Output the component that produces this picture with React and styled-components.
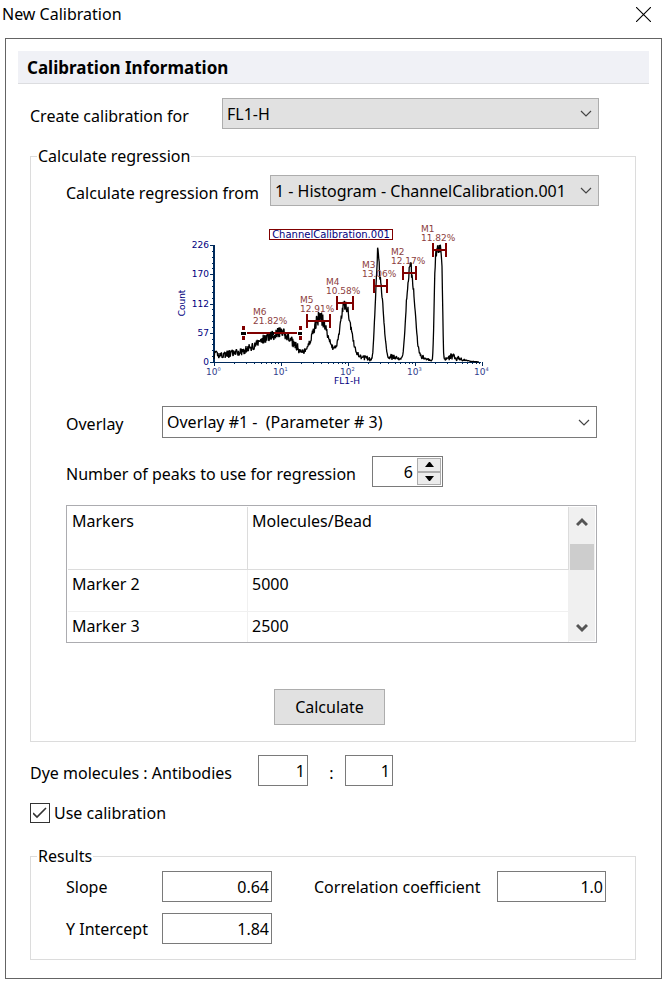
import React, { useState } from "react";
import styled, { createGlobalStyle } from "styled-components";

const markers = [
  { name: "M1", percent: "11.82%", from: 263, to: 276, y: 30, x: 251, labelY: 12 },
  { name: "M2", percent: "12.17%", from: 233, to: 246, y: 53, x: 221, labelY: 35 },
  { name: "M3", percent: "13.06%", from: 204, to: 217, y: 66, x: 192, labelY: 48 },
  { name: "M4", percent: "10.58%", from: 167, to: 183, y: 83, x: 156, labelY: 65 },
  { name: "M5", percent: "12.91%", from: 137, to: 160, y: 101, x: 130, labelY: 83 },
];

const yTicks = [
  { value: 226, y: 25 },
  { value: 170, y: 54 },
  { value: 112, y: 84 },
  { value: 57, y: 113 },
  { value: 0, y: 142 },
];

const DECADE = 67;
const AXIS_X = 44;
const AXIS_Y = 142;

//* center, height, left spread, right spread, shape, noise
const peaks = [
  [110, 22, 22, 13, 2, 4],
  [150, 40, 8, 8, 2, 10],
  [175, 54, 5, 6, 2, 10],
  [208, 82, 3, 5, 3, 8],
  [208, 30, 1, 1, 2, 4],
  [240, 80, 4, 5, 3, 8],
  [240, 14, 1, 2, 2, 8],
  [269, 110, 4, 3, 6, 10],
  [282, 3, 5, 9, 2, 5],
  [251, 4, 3, 4, 2, 5],
  [222, 3, 6, 6, 2, 3],
];

const buildHistogram = () => {
  let seed = 41;
  const random = () => {
    seed = (seed * 16807) % 2147483647;
    return seed / 2147483647;
  };
  const points = [];

  for (let x = AXIS_X; x <= 309; x += 0.4) {
    let level = x < 128 ? 7 : x < 200 ? 4 : x < 280 ? 2 : 2 - (x - 280) / 14;
    let noise = x < 128 ? 8 : x < 200 ? 5 : x < 295 ? 3 : 1;

    peaks.forEach(([center, height, left, right, shape, jitter]) => {
      const spread = x < center ? left : right;
      const shapeAt = Math.exp(
        -Math.pow(Math.abs(x - center) / (spread * 1.3), shape)
      );
      level += height * shapeAt;
      noise += jitter * Math.pow(shapeAt, 3);
    });

    const value = Math.max(0, level + (random() - 0.5) * noise);
    points.push(
      `${x.toFixed(1)},${(AXIS_Y - Math.min(value, 117)).toFixed(1)}`
    );
  }

  return points.join(" ");
};

const histogram = buildHistogram();

const Histogram = () => (
  <StyledChart viewBox="0 0 320 170" role="img" aria-label="Histogram">
    <g stroke="#002a5c" fill="none">
      <path d="M44 25V142" strokeWidth="2" />
      <path d="M44 142.5H311" strokeWidth="1" />
      {yTicks.map(({ value, y }) => (
        <path key={value} d={`M40 ${y + 0.5}h5`} />
      ))}
      {Array.from({ length: 20 }, (_, i) => (
        <path key={i} d={`M42 ${Math.round(25 + i * 5.85) + 0.5}h2`} />
      ))}
      {[0, 1, 2, 3].map((decade) =>
        [2, 3, 4, 5, 6, 7, 8, 9].map((n) => (
          <path
            key={`${decade}-${n}`}
            d={`M${Math.round(AXIS_X + (decade + Math.log10(n)) * DECADE) + 0.5} 142v2`}
          />
        ))
      )}
      {[0, 1, 2, 3, 4].map((decade) => (
        <path key={decade} d={`M${AXIS_X + decade * DECADE + 0.5} 142v4`} />
      ))}
    </g>
    <polyline
      points={histogram}
      fill="none"
      stroke="#000"
      strokeWidth="1.3"
      strokeLinejoin="bevel"
    />
    {markers.map(({ name, percent, from, to, y, x, labelY }) => (
      <g key={name}>
        <path
          d={`M${from} ${y}H${to}M${from} ${y - 7}v14M${to} ${y - 7}v14`}
          stroke="#800000"
          strokeWidth="2"
        />
        <StyledMarkerText x={x} y={labelY}>
          {name}
        </StyledMarkerText>
        <StyledMarkerText x={x} y={labelY + 9}>
          {percent}
        </StyledMarkerText>
      </g>
    ))}
    <path d="M77 113H127" stroke="#800000" strokeWidth="2" />
    <path
      d="M73.5 106v4M73.5 116v4M130.5 106v4M130.5 116v4"
      stroke="#800000"
      strokeWidth="3"
    />
    <path d="M71 113.5h5M100 113.5h4M128 113.5h4" stroke="#000" strokeWidth="3" />
    <StyledMarkerText x="83" y="95">
      M6
    </StyledMarkerText>
    <StyledMarkerText x="83" y="104">
      21.82%
    </StyledMarkerText>
    <rect x="99.5" y="9.5" width="123" height="10" fill="#fff" stroke="#800000" />
    <StyledChartTitle x="161" y="18" textAnchor="middle">
      ChannelCalibration.001
    </StyledChartTitle>
    {yTicks.map(({ value, y }) => (
      <StyledAxisText key={value} x="39" y={y + 3} textAnchor="end">
        {value}
      </StyledAxisText>
    ))}
    {[0, 1, 2, 3, 4].map((decade) => (
      <StyledScaleText key={decade} x={36 + decade * DECADE} y="155">
        10
        <tspan dy="-4" fontSize="5">
          {decade}
        </tspan>
      </StyledScaleText>
    ))}
    <StyledAxisText x="177" y="164" textAnchor="middle">
      FL1-H
    </StyledAxisText>
    <StyledAxisText transform="translate(15 83) rotate(-90)" textAnchor="middle">
      Count
    </StyledAxisText>
  </StyledChart>
);

const Dropdown = ({ id, options, plain }) => (
  <StyledDropdown>
    <StyledSelect id={id} $plain={plain}>
      {options.map((option) => (
        <option key={option}>{option}</option>
      ))}
    </StyledSelect>
    <svg width="12" height="7" viewBox="0 0 12 7" aria-hidden="true">
      <path d="M1 1l5 5 5-5" fill="none" stroke="#444" strokeWidth="1.2" />
    </svg>
  </StyledDropdown>
);

const App = () => {
  const [peakCount, setPeakCount] = useState(6);
  const [useCalibration, setUseCalibration] = useState(true);

  return (
    <StyledDialog>
      <GlobalStyle />
      <StyledTitleBar>
        <StyledTitle>New Calibration</StyledTitle>
        <StyledClose type="button" aria-label="Close">
          <svg width="15" height="15" viewBox="0 0 15 15">
            <path d="M0 0l15 15M15 0L0 15" stroke="#000" strokeWidth="1.1" />
          </svg>
        </StyledClose>
      </StyledTitleBar>

      <StyledPanel>
        <StyledHeading>Calibration Information</StyledHeading>
        <StyledContent>
          <StyledChannelRow>
            <StyledLabel htmlFor="channel">Create calibration for</StyledLabel>
            <Dropdown id="channel" options={["FL1-H"]} />
          </StyledChannelRow>

          <StyledRegression>
            <StyledLegend>Calculate regression</StyledLegend>
            <StyledSourceRow>
              <StyledLabel htmlFor="source">
                Calculate regression from
              </StyledLabel>
              <Dropdown
                id="source"
                options={["1 - Histogram - ChannelCalibration.001"]}
              />
            </StyledSourceRow>
            <Histogram />
            <StyledOverlayRow>
              <StyledLabel htmlFor="overlay">Overlay</StyledLabel>
              <Dropdown
                id="overlay"
                plain
                options={["Overlay #1 - \u00a0(Parameter # 3)"]}
              />
            </StyledOverlayRow>
            <StyledPeaksRow>
              <StyledLabel htmlFor="peaks">
                Number of peaks to use for regression
              </StyledLabel>
              <StyledSpinner>
                <StyledSpinnerInput
                  id="peaks"
                  value={peakCount}
                  onChange={(e) => setPeakCount(Number(e.target.value) || 0)}
                />
                <StyledSteps>
                  <StyledStep
                    type="button"
                    aria-label="Increase"
                    onClick={() => setPeakCount(peakCount + 1)}
                  >
                    <svg width="9" height="5" viewBox="0 0 9 5">
                      <path d="M0 5h9L5 0H4z" />
                    </svg>
                  </StyledStep>
                  <StyledStep
                    type="button"
                    aria-label="Decrease"
                    onClick={() => setPeakCount(peakCount - 1)}
                  >
                    <svg width="9" height="5" viewBox="0 0 9 5">
                      <path d="M0 0h9L5 5H4z" />
                    </svg>
                  </StyledStep>
                </StyledSteps>
              </StyledSpinner>
            </StyledPeaksRow>

            <StyledGrid>
              <StyledTable>
                <thead>
                  <tr>
                    <th scope="col">Markers</th>
                    <th scope="col">Molecules/Bead</th>
                  </tr>
                </thead>
                <tbody>
                  <tr>
                    <td>Marker 2</td>
                    <td>5000</td>
                  </tr>
                  <tr>
                    <td>Marker 3</td>
                    <td>2500</td>
                  </tr>
                </tbody>
              </StyledTable>
              <StyledScrollbar>
                <StyledScrollButton type="button" aria-label="Scroll up">
                  <svg width="12" height="10" viewBox="0 0 12 10">
                    <path d="M1 8l5-5 5 5" fill="none" stroke="#555" strokeWidth="3" />
                  </svg>
                </StyledScrollButton>
                <StyledThumb />
                <StyledScrollButton type="button" aria-label="Scroll down">
                  <svg width="12" height="10" viewBox="0 0 12 10">
                    <path d="M1 2l5 5 5-5" fill="none" stroke="#555" strokeWidth="3" />
                  </svg>
                </StyledScrollButton>
              </StyledScrollbar>
            </StyledGrid>

            <StyledCalculate type="button">Calculate</StyledCalculate>
          </StyledRegression>

          <StyledRatioRow>
            <StyledLabel htmlFor="dye">Dye molecules : Antibodies</StyledLabel>
            <StyledInput id="dye" defaultValue="1" $width={50} />
            <StyledLabel htmlFor="antibodies">:</StyledLabel>
            <StyledInput id="antibodies" defaultValue="1" $width={48} />
          </StyledRatioRow>

          <StyledCheck>
            <input
              type="checkbox"
              checked={useCalibration}
              onChange={(e) => setUseCalibration(e.target.checked)}
            />
            <svg width="14" height="12" viewBox="0 0 14 12" aria-hidden="true">
              {useCalibration && (
                <path d="M0 6l4 4L13 1" fill="none" stroke="#333" strokeWidth="1.6" />
              )}
            </svg>
            <span>Use calibration</span>
          </StyledCheck>

          <StyledResults>
            <StyledLegend>Results</StyledLegend>
            <StyledResultGrid>
              <StyledResultLabel htmlFor="slope">Slope</StyledResultLabel>
              <StyledInput id="slope" defaultValue="0.64" $width={110} />
              <StyledResultLabel htmlFor="correlation">
                Correlation coefficient
              </StyledResultLabel>
              <StyledInput id="correlation" defaultValue="1.0" $width={109} />
              <StyledResultLabel htmlFor="intercept">
                Y Intercept
              </StyledResultLabel>
              <StyledInput id="intercept" defaultValue="1.84" $width={110} />
            </StyledResultGrid>
          </StyledResults>
        </StyledContent>
      </StyledPanel>
    </StyledDialog>
  );
};

export default App;

const GlobalStyle = createGlobalStyle`
  * {
    box-sizing: border-box;
  }

  body {
    margin: 0;
    background: #fff;
    color: #000;
    font: 16px/22px "Noto Sans", "Open Sans", sans-serif;
  }

  button,
  input,
  select {
    margin: 0;
    color: inherit;
    font: inherit;
  }
`;

const StyledDialog = styled.main`
  padding: 0 0 2px 5px;
`;

const StyledTitleBar = styled.header`
  display: flex;
  justify-content: space-between;
  align-items: center;
  height: 38px;
  padding: 0 11px 10px 0;
  margin-left: -3px;
`;

const StyledTitle = styled.h1`
  margin: 0;
  font-size: 16px;
  font-weight: 400;
`;

const StyledClose = styled.button`
  display: flex;
  padding: 0;
  border: 0;
  background: none;
`;

const StyledPanel = styled.section`
  padding: 12px 12px 18px;
  border: 1px solid #646464;
`;

const StyledHeading = styled.h2`
  margin: 0;
  padding: 6px 9px 4px;
  border-bottom: 1px solid #dcdde0;
  background: #f0f1f6;
  font-size: 17px;
  font-weight: 700;
`;

const StyledContent = styled.div`
  padding: 14px 13px 0 12px;
`;

const StyledLabel = styled.label`
  padding-top: 4px;
  white-space: nowrap;
`;

const StyledResultLabel = styled(StyledLabel)`
  padding-top: 0;
`;

const StyledChannelRow = styled.div`
  display: grid;
  grid-template-columns: 192px 1fr;
  align-items: center;
  padding-right: 37px;
`;

const StyledFieldset = styled.fieldset`
  min-width: 0;
  margin: 0;
  border: 1px solid #dcdcdc;
`;

const StyledRegression = styled(StyledFieldset)`
  margin-top: 16px;
  padding: 8px 42px 16px 35px;
`;

const StyledResults = styled(StyledFieldset)`
  margin-top: 22px;
  padding: 4px 29px 15px 35px;
`;

const StyledLegend = styled.legend`
  margin-left: -29px;
  padding: 0 1px;
`;

const StyledSourceRow = styled.div`
  display: grid;
  grid-template-columns: 204px 1fr;
  align-items: center;
  margin-right: -6px;
`;

const StyledOverlayRow = styled.div`
  display: grid;
  grid-template-columns: 96px 1fr;
  align-items: center;
  margin-top: 16px;
  margin-right: -4px;
`;

const StyledPeaksRow = styled.div`
  display: flex;
  align-items: center;
  gap: 16px;
  margin-top: 18px;
`;

const StyledDropdown = styled.div`
  display: grid;
  align-items: center;
  min-width: 0;

  > * {
    grid-area: 1 / 1;
  }

  svg {
    justify-self: end;
    margin-right: 7px;
    pointer-events: none;
  }
`;

const StyledSelect = styled.select`
  width: 100%;
  height: ${(props) => (props.$plain ? 32 : 31)}px;
  padding: 0 22px 0 4px;
  border: 1px solid ${(props) => (props.$plain ? "#7a7a7a" : "#adadad")};
  border-radius: 0;
  background: ${(props) => (props.$plain ? "#fff" : "#e1e1e1")};
  appearance: none;
`;

const StyledChart = styled.svg`
  display: block;
  width: 320px;
  height: 170px;
  margin: 14px auto 0;
`;

const StyledAxisText = styled.text`
  fill: #000080;
  font: 9px "DejaVu Sans", sans-serif;
`;

const StyledChartTitle = styled(StyledAxisText)`
  font-size: 10px;
`;

const StyledScaleText = styled(StyledAxisText)`
  fill: #30408c;
`;

const StyledMarkerText = styled(StyledAxisText)`
  fill: #8c4040;
`;

const StyledSpinner = styled.div`
  display: flex;
  width: 71px;
  height: 31px;
  padding: 1px;
  border: 1px solid #7a7a7a;
`;

const StyledSpinnerInput = styled.input`
  flex: 1;
  min-width: 0;
  padding: 0 4px;
  border: 0;
  text-align: right;
`;

const StyledSteps = styled.div`
  display: grid;
  grid-template-rows: 1fr 1fr;
  width: 24px;
`;

const StyledStep = styled.button`
  display: flex;
  justify-content: center;
  align-items: center;
  padding: 0;
  border: 1px solid #adadad;
  background: #ececec;
`;

const StyledGrid = styled.div`
  display: flex;
  height: 138px;
  margin-top: 18px;
  margin-right: -4px;
  padding: 1px;
  border: 1px solid #acacb0;
  overflow: hidden;
`;

const StyledTable = styled.table`
  flex: 1;
  height: 147px;
  border-spacing: 0;
  table-layout: fixed;

  th,
  td {
    height: 42px;
    padding: 3px 4px;
    border-right: 1px solid #f0f0f0;
    border-bottom: 1px solid #f0f0f0;
    font-weight: 400;
    text-align: left;
    vertical-align: top;
  }

  th {
    height: 63px;
    border-color: #dcdcdc;
  }

  th:first-child {
    width: 180px;
  }
`;

const StyledScrollbar = styled.div`
  display: flex;
  flex-direction: column;
  width: 26px;
  padding: 0 1px;
  background: #f0f0f0;
`;

const StyledScrollButton = styled.button`
  display: flex;
  justify-content: center;
  align-items: center;
  height: 30px;
  padding: 0;
  border: 0;
  background: none;

  &:last-child {
    height: 26px;
    margin-top: auto;
  }
`;

const StyledThumb = styled.div`
  height: 26px;
  margin-top: 7px;
  background: #cdcdcd;
`;

const StyledCalculate = styled.button`
  display: block;
  width: 111px;
  height: 36px;
  margin: 46px auto 0;
  padding: 0;
  border: 1px solid #adadad;
  background: #e1e1e1;
`;

const StyledInput = styled.input`
  width: ${(props) => props.$width}px;
  height: 31px;
  padding: 0 2px;
  border: 1px solid #7a7a7a;
  text-align: right;
`;

const StyledRatioRow = styled.div`
  display: grid;
  grid-template-columns: 228px 50px 37px 48px;
  align-items: center;
  margin-top: 13px;

  ${StyledLabel}:nth-of-type(2) {
    text-align: center;
    padding-left: 10px;
  }
`;

const StyledCheck = styled.label`
  display: grid;
  grid-template-columns: 20px max-content;
  align-items: center;
  width: max-content;
  height: 20px;
  margin-top: 17px;
  column-gap: 4px;

  input {
    grid-area: 1 / 1;
    width: 20px;
    height: 20px;
    border: 1px solid #333;
    background: #fff;
    appearance: none;
  }

  svg {
    grid-area: 1 / 1;
    justify-self: center;
    pointer-events: none;
  }

  span {
    line-height: 20px;
  }
`;

const StyledResultGrid = styled.div`
  display: grid;
  grid-template-columns: 96px 110px 1fr 109px;
  align-items: center;
  row-gap: 11px;

  ${StyledResultLabel}:nth-of-type(2) {
    padding-left: 42px;
  }
`;
